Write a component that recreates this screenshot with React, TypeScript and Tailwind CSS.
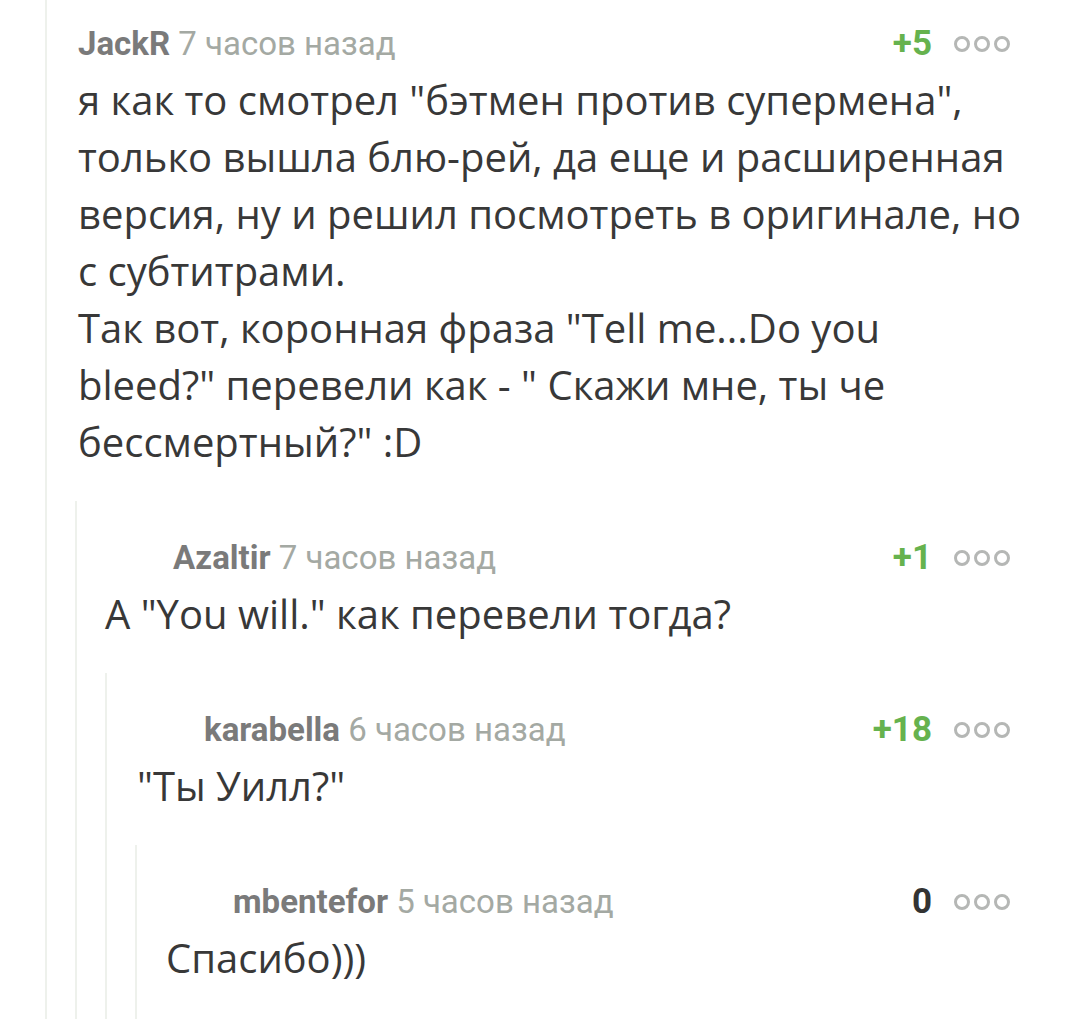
type CommentData = {
  author: string;
  time: string;
  rating: string;
  body: string;
  child?: CommentData;
};

const thread: CommentData = {
  author: "JackR",
  time: "7 часов назад",
  rating: "+5",
  body:
    'я как то смотрел "бэтмен против супермена", только вышла блю-рей, да еще и расширенная версия, ну и решил посмотреть в оригинале, но с субтитрами.\nТак вот, коронная фраза "Tell me...Do you bleed?" перевели как - " Скажи мне, ты че бессмертный?" :D',
  child: {
    author: "Azaltir",
    time: "7 часов назад",
    rating: "+1",
    body: 'А "You will." как перевели тогда?',
    child: {
      author: "karabella",
      time: "6 часов назад",
      rating: "+18",
      body: '"Ты Уилл?"',
      child: {
        author: "mbentefor",
        time: "5 часов назад",
        rating: "0",
        body: "Спасибо)))",
      },
    },
  },
};

// per nesting level: header indent / body indent
const headerPad = ["pl-[31px]", "pl-[96px]", "pl-[97px]", "pl-[96px]"];
const bodyPad = ["pl-[31px]", "pl-[28px]", "pl-[30px]", "pl-[29px]"];

function Dots() {
  return (
    <div className="flex items-center gap-1">
      <span className="h-4 w-4 rounded-full border-[3px] border-[#b5b7b5]" />
      <span className="h-4 w-4 rounded-full border-[3px] border-[#b5b7b5]" />
      <span className="h-4 w-4 rounded-full border-[3px] border-[#b5b7b5]" />
    </div>
  );
}

function Comment({ c, level }: { c: CommentData; level: number }) {
  const positive = c.rating.startsWith("+");
  return (
    <div
      className={`flex flex-1 flex-col border-l-2 border-[#eef1ec] ${
        level === 0 ? "pt-[22px]" : "ml-[28px] mt-[31px] pt-[35px]"
      }`}
    >
      {/* Header */}
      <div className={`mr-[16px] flex h-[44px] items-center justify-between ${headerPad[level]}`}>
        <div className="font-['Roboto',sans-serif] text-[33px] leading-[44px]">
          <span className="font-bold text-[#7a7a7a]">{c.author}</span>{" "}
          <span className="text-[#a4a9a3]">{c.time}</span>
        </div>
        <div className="flex items-center gap-[22px]">
          <span
            className={`font-['Roboto',sans-serif] text-[35px] font-bold leading-[44px] ${
              positive ? "text-[#66b24e]" : "text-[#333333]"
            }`}
          >
            {c.rating}
          </span>
          <Dots />
        </div>
      </div>

      {/* Body */}
      <div
        className={`mt-[5px] whitespace-pre-line font-['Open_Sans',sans-serif] text-[40px] leading-[57px] text-[#383838] ${bodyPad[level]}`}
      >
        {c.body}
      </div>

      {c.child && <Comment c={c.child} level={level + 1} />}
    </div>
  );
}

export default function App() {
  return (
    <div className="flex min-h-screen flex-col bg-white pl-[45px] pr-[54px]">
      <Comment c={thread} level={0} />
    </div>
  );
}
